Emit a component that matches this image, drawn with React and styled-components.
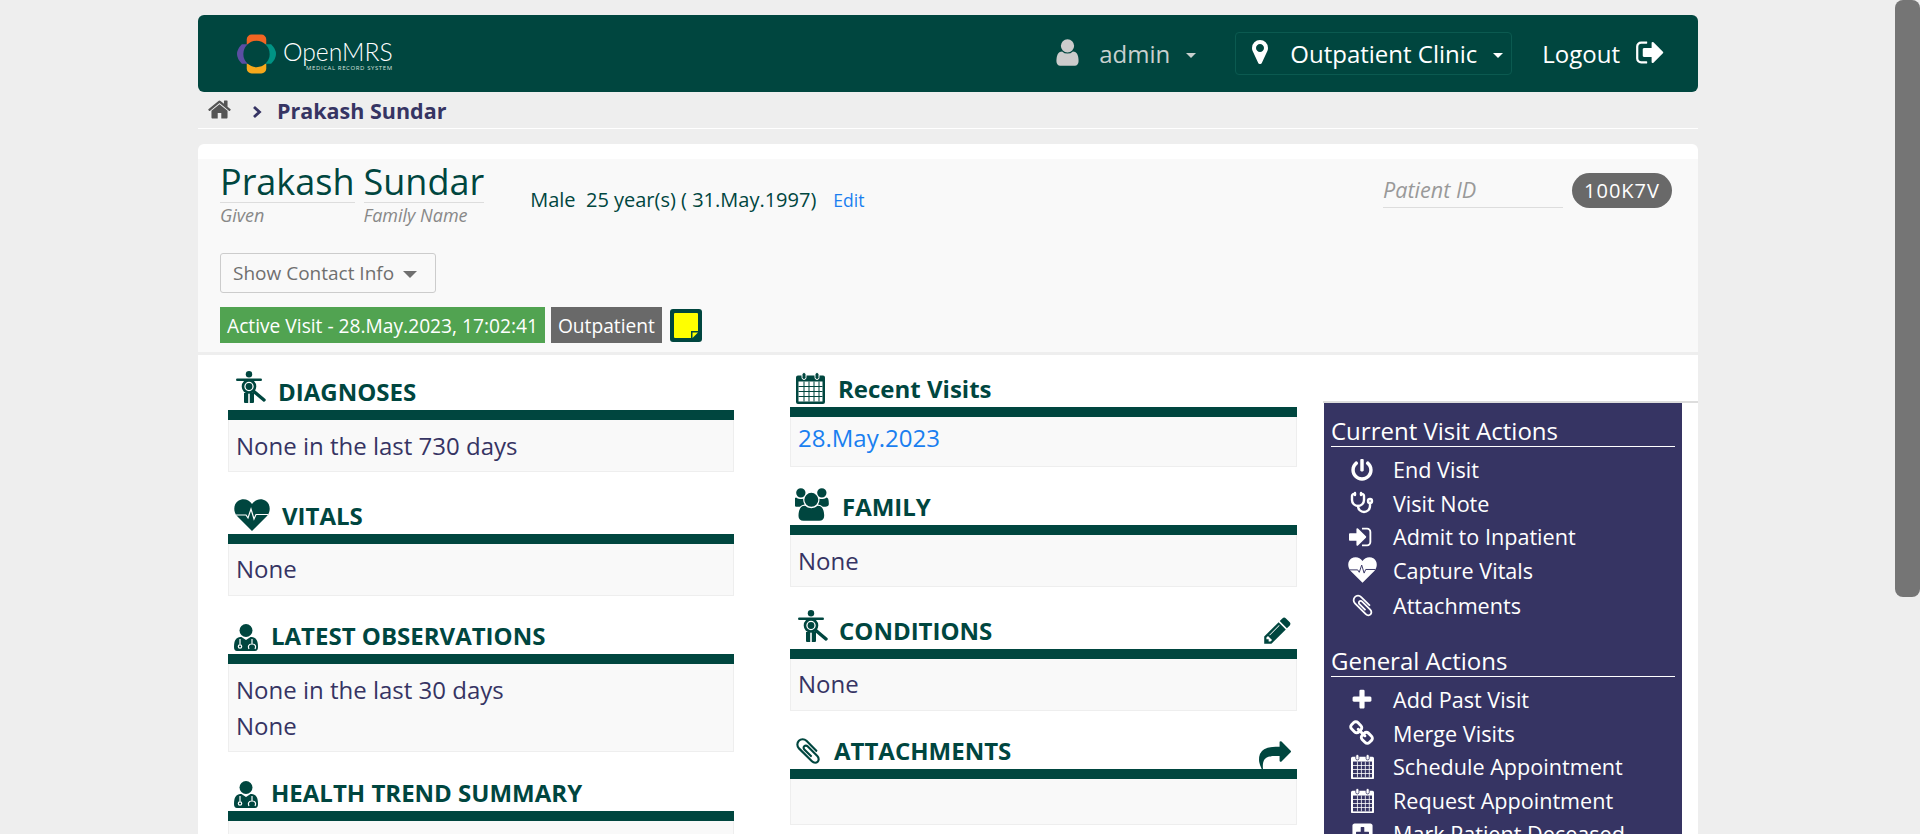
import React from "react";
import styled, { createGlobalStyle } from "styled-components";
import { FaPowerOff, FaPlusSquare } from "react-icons/fa";
import { Stethoscope } from "lucide-react";

const TEAL = "#00463f";
const PURPLE = "#363463";

const GlobalStyle = createGlobalStyle`
  html, body {
    margin: 0;
    height: 100%;
    overflow: hidden;
    background: #eeeeee;
  }
  * { box-sizing: border-box; }
  body {
    font-family: "Open Sans", "Liberation Sans", sans-serif;
  }
`;

const Shell = styled.div`
  height: 100vh;
  overflow: hidden;
  padding-right: 25px;
`;

const ScrollThumb = styled.div`
  position: fixed;
  top: 0;
  right: 0;
  width: 25px;
  height: 597px;
  background: #757575;
  border-radius: 8px;
`;

const Page = styled.div`
  width: 1500px;
  margin-left: 198px;
  padding-top: 15px;
`;

const Header = styled.header`
  height: 77px;
  background: ${TEAL};
  border-radius: 6px;
  display: flex;
  align-items: center;
  padding: 0 32px 0 39px;
`;

const Logo = styled.div`
  display: flex;
  align-items: center;
  gap: 7px;
  margin-right: auto;
`;

const LogoText = styled.div`
  display: flex;
  flex-direction: column;
  align-items: flex-end;
  color: #fff;
  font-family: "Lato", sans-serif;
  font-weight: 300;
  font-size: 24.7px;
  line-height: 26px;
  margin-top: 4px;
  span {
    font-size: 6px;
    line-height: 7px;
    letter-spacing: 0.6px;
    font-family: "Open Sans", sans-serif;
    font-weight: 400;
    color: #d5e0dd;
  }
`;

const NavUser = styled.div`
  display: flex;
  align-items: center;
  color: #c8d0ce;
  font-size: 24px;
  margin-right: 39px;
  svg { width: 31px; height: 31px; margin-right: 16px; fill: #cccccc; margin-top: -3px; }
`;

const Caret = styled.i`
  display: inline-block;
  width: 0;
  height: 0;
  border-left: ${(p) => p.$size || 5}px solid transparent;
  border-right: ${(p) => p.$size || 5}px solid transparent;
  border-top: ${(p) => p.$size || 5}px solid ${(p) => p.$color || "#fff"};
  margin-left: ${(p) => p.$gap || 16}px;
  margin-top: 3px;
`;

const NavLocation = styled.div`
  width: 277px;
  height: 43px;
  border: 1px solid #0b5a50;
  border-radius: 4px;
  display: flex;
  align-items: center;
  color: #fff;
  font-size: 24px;
  padding-left: 10px;
  svg { width: 28px; height: 28px; fill: #fff; margin-right: 16px; margin-top: -3px; }
`;

const NavLogout = styled.div`
  display: flex;
  align-items: center;
  color: #fff;
  font-size: 24px;
  margin-left: 30px;
  svg { width: 31px; height: 31px; fill: #fff; margin-left: 15px; margin-top: -3px; }
`;

const Breadcrumb = styled.nav`
  height: 37px;
  border-bottom: 1px solid #fff;
  display: flex;
  align-items: center;
  padding: 1px 0 0 9px;
  color: ${PURPLE};
  font-weight: 700;
  font-size: 21.5px;
  svg.home { width: 25px; height: 25px; fill: #555; margin-right: 19px; margin-top: -3px; }
  svg.chev { width: 12px; height: 14px; margin-right: 14px; margin-top: 2px; }
`;

const Card = styled.main`
  margin-top: 15px;
  background: #fff;
  border-radius: 6px 6px 0 0;
  padding-top: 15px;
`;

const Demographics = styled.section`
  height: 196px;
  background: #f9f9f9;
  border-bottom: 3px solid #eeeeee;
  padding: 0 22px;
  display: flex;
  flex-direction: column;
`;

const TopRow = styled.div`
  display: flex;
  align-items: flex-start;
  height: 94px;
`;

const NamePart = styled.div`
  margin-right: 9px;
  margin-top: 2px;
  b {
    display: block;
    font-weight: 400;
    font-size: 36px;
    line-height: 41px;
    color: ${TEAL};
    border-bottom: 1px solid #dddddd;
  }
  em {
    display: block;
    font-size: 18px;
    line-height: 24px;
    color: #888888;
  }
`;

const Info = styled.div`
  margin-left: 37px;
  margin-top: 27px;
  font-size: 20px;
  line-height: 28px;
  color: ${TEAL};
  white-space: pre;
  a { color: #1a7ff0; font-size: 17.5px; margin-left: 17px; }
`;

const PatientId = styled.div`
  margin-left: auto;
  margin-right: 4px;
  margin-top: 14px;
  display: flex;
  align-items: center;
  gap: 9px;
  em {
    display: block;
    width: 180px;
    border-bottom: 1px solid #dddddd;
    font-size: 21.6px;
    line-height: 34px;
    color: #999999;
  }
  span {
    width: 100px;
    height: 35px;
    border-radius: 18px;
    background: #696969;
    color: #fff;
    font-size: 20px;
    letter-spacing: 1px;
    display: flex;
    align-items: center;
    justify-content: center;
  }
`;

const ContactButton = styled.button`
  width: 216px;
  height: 40px;
  background: transparent;
  border: 1px solid #cccccc;
  border-radius: 3px;
  color: #6f6f6f;
  font-family: inherit;
  font-size: 19px;
  padding: 0 0 0 12px;
  display: flex;
  align-items: center;
`;

const Tags = styled.div`
  display: flex;
  align-items: center;
  gap: 6px;
  margin-top: 14px;
`;

const Tag = styled.span`
  height: 36px;
  padding: 0 7px;
  display: flex;
  align-items: center;
  color: #fff;
  font-size: 19.2px;
  background: ${(p) => p.$bg};
`;

const StickyNote = styled.svg`
  width: 32px;
  height: 33px;
  margin-left: 2px;
`;

const Dashboard = styled.div`
  display: flex;
  background: #fff;
  padding-left: 30px;
`;

const Column = styled.div`
  width: ${(p) => p.$width}px;
  margin-right: ${(p) => p.$gap}px;
  display: flex;
  flex-direction: column;
`;

const SectionHead = styled.div`
  height: ${(p) => p.$height}px;
  border-bottom: 10px solid ${TEAL};
  display: flex;
  align-items: flex-end;
  color: ${TEAL};
  font-weight: 700;
  font-size: 24px;
  line-height: 30px;
  padding-bottom: 3px;
  padding-left: ${(p) => p.$indent || 0}px;
`;

const HeadIcon = styled.span`
  display: flex;
  align-items: flex-end;
  height: 34px;
  margin-right: ${(p) => p.$gap}px;
  svg { display: block; fill: ${TEAL}; }
`;

const HeadAction = styled.span`
  margin-left: auto;
  margin-right: ${(p) => p.$right}px;
  margin-bottom: ${(p) => p.$below}px;
  display: flex;
  svg { fill: ${TEAL}; }
`;

const SectionBody = styled.div`
  height: ${(p) => p.$height}px;
  background: #f9f9f9;
  border: 1px solid #eeeeee;
  border-top: 0;
  padding: ${(p) => p.$pad ?? 8}px 7px 0;
  color: ${PURPLE};
  font-size: 24px;
  line-height: 36px;
  a { color: #1a7ff0; }
`;

const ActionsColumn = styled.aside`
  width: 375px;
  margin-top: 46px;
  border-top: 2px solid #dddddd;
  padding-left: 1px;
  height: 700px;
`;

const Actions = styled.div`
  width: 358px;
  height: 100%;
  background: ${PURPLE};
  padding: 13px 7px 0 7px;
  color: #fff;
`;

const ActionTitle = styled.div`
  font-size: 24px;
  line-height: 29px;
  padding-bottom: 1px;
  border-bottom: 1px solid #fff;
  margin-bottom: 6px;
`;

const ActionList = styled.ul`
  list-style: none;
  margin: 0 0 23px;
  padding: 0;
`;

const ActionItem = styled.li`
  display: flex;
  align-items: center;
  height: ${(p) => p.$height || 33.5}px;
  font-size: 21.6px;
`;

const ActionIcon = styled.span`
  width: 62px;
  flex: none;
  display: flex;
  justify-content: center;
`;

const Fa4 = ({ d, size, wide, className }) => (
  <svg viewBox={`0 0 ${wide || 1792} 1792`} width={size} height={size} fill="currentColor" className={className}>
    <path d={d} />
  </svg>
);

const HOME = "M1472 992v480q0 26-19 45t-45 19h-384v-384h-256v384h-384q-26 0-45-19t-19-45v-480q0-1 .5-3t.5-3l575-474 575 474q1 2 1 6zm223-69l-62 74q-8 9-21 11h-3q-13 0-21-7l-692-577-692 577q-12 8-24 7-13-2-21-11l-62-74q-8-10-7-23.5t11-21.5l719-599q32-26 76-26t76 26l244 204v-195q0-14 9-23t23-9h192q14 0 23 9t9 23v408l219 182q10 8 11 21.5t-7 23.5z";
const USER = "M1536 1399q0 109-62.5 187t-150.5 78h-854q-88 0-150.5-78t-62.5-187q0-85 8.5-160.5t31.5-152 58.5-131 94-89 134.5-34.5q131 128 313 128t313-128q76 0 134.5 34.5t94 89 58.5 131 31.5 152 8.5 160.5zm-256-887q0 159-112.5 271.5t-271.5 112.5-271.5-112.5-112.5-271.5 112.5-271.5 271.5-112.5 271.5 112.5 112.5 271.5z";
const MARKER = "M1152 640q0-106-75-181t-181-75-181 75-75 181 75 181 181 75 181-75 75-181zm256 0q0 109-33 179l-364 774q-16 33-47.5 52t-67.5 19-67.5-19-46.5-52l-365-774q-33-70-33-179 0-212 150-362t362-150 362 150 150 362z";
const SIGN_OUT = "M704 1440q0 4 1 20t.5 26.5-3 23.5-10 19.5-20.5 6.5h-320q-119 0-203.5-84.5t-84.5-203.5v-704q0-119 84.5-203.5t203.5-84.5h320q13 0 22.5 9.5t9.5 22.5q0 4 1 20t.5 26.5-3 23.5-10 19.5-20.5 6.5h-320q-66 0-113 47t-47 113v704q0 66 47 113t113 47h312l11.5 1 11.5 3 8 5.5 7 9 2 13.5zm928-544q0 26-19 45l-544 544q-19 19-45 19t-45-19-19-45v-288h-448q-26 0-45-19t-19-45v-384q0-26 19-45t45-19h448v-288q0-26 19-45t45-19 45 19l544 544q19 19 19 45z";
const SIGN_IN = "M1184 896q0 26-19 45l-544 544q-19 19-45 19t-45-19-19-45v-288h-448q-26 0-45-19t-19-45v-384q0-26 19-45t45-19h448v-288q0-26 19-45t45-19 45 19l544 544q19 19 19 45zm352-352v704q0 119-84.5 203.5t-203.5 84.5h-320q-13 0-22.5-9.5t-9.5-22.5q0-4-1-20t-.5-26.5 3-23.5 10-19.5 20.5-6.5h320q66 0 113-47t47-113v-704q0-66-47-113t-113-47h-312l-11.5-1-11.5-3-8-5.5-7-9-2-13.5q0-4-1-20t-.5-26.5 3-23.5 10-19.5 20.5-6.5h320q119 0 203.5 84.5t84.5 203.5z";
const SHARE = "M1792 640q0 26-19 45l-512 512q-19 19-45 19t-45-19-19-45v-256h-224q-98 0-175.5 6t-154 21.5-133 42.5-105.5 69.5-80 101-48.5 138.5-17.5 181q0 55 5 123 0 6 2.5 23.5t2.5 26.5q0 15-8.5 25t-23.5 10q-16 0-28-17-7-9-13-22t-13.5-30-10.5-24q-127-285-127-451 0-199 53-333 162-403 875-403h224v-256q0-26 19-45t45-19 45 19l512 512q19 19 19 45z";
const PENCIL = "M491 1536l91-91-235-235-91 91v107h128v128h107zm523-928q0-22-22-22-10 0-17 7l-542 542q-7 7-7 17 0 22 22 22 10 0 17-7l542-542q7-7 7-17zm-54-192l416 416-832 832h-416v-416zm683 96q0 53-37 90l-166 166-416-416 166-165q36-38 90-38 53 0 91 38l235 234q37 39 37 91z";
const PLUS = "M1600 736v192q0 40-28 68t-68 28h-416v416q0 40-28 68t-68 28h-192q-40 0-68-28t-28-68v-416h-416q-40 0-68-28t-28-68v-192q0-40 28-68t68-28h416v-416q0-40 28-68t68-28h192q40 0 68 28t28 68v416h416q40 0 68 28t28 68z";
const GROUP = "M529 896q-162 5-265 128h-134q-82 0-138-40.5t-56-118.5q0-353 124-353 6 0 43.5 21t97.5 42.5 119 21.5q67 0 133-23-5 37-5 66 0 139 81 256zm1071 637q0 120-73 189.5t-194 69.5h-874q-121 0-194-69.5t-73-189.5q0-53 3.5-103.5t14-109 26.5-108.5 43-97.5 62-81 85.5-53.5 111.5-20q10 0 43 21.5t73 48 107 48 135 21.5 135-21.5 107-48 73-48 43-21.5q61 0 111.5 20t85.5 53.5 62 81 43 97.5 26.5 108.5 14 109 3.5 103.5zm-1024-1277q0 106-75 181t-181 75-181-75-75-181 75-181 181-75 181 75 75 181zm704 384q0 159-112.5 271.5t-271.5 112.5-271.5-112.5-112.5-271.5 112.5-271.5 271.5-112.5 271.5 112.5 112.5 271.5zm576 225q0 78-56 118.5t-138 40.5h-134q-103-123-265-128 81-117 81-256 0-29-5-66 66 23 133 23 59 0 119-21.5t97.5-42.5 43.5-21q124 0 124 353zm-128-609q0 106-75 181t-181 75-181-75-75-181 75-181 181-75 181 75 75 181z";
const CHAIN = "M1456 1216q0-40-28-68l-208-208q-28-28-68-28-42 0-72 32 3 3 19 18.5t21.5 21.5 15 19 13 25.5 3.5 27.5q0 40-28 68t-68 28q-15 0-27.5-3.5t-25.5-13-19-15-21.5-21.5-18.5-19q-33 31-33 73 0 40 28 68l206 207q27 27 68 27 40 0 68-26l147-146q28-28 28-67zm-703-705q0-40-28-68l-206-207q-28-28-68-28-39 0-68 27l-147 146q-28 28-28 67 0 40 28 68l208 208q27 27 68 27 42 0 72-31-3-3-19-18.5t-21.5-21.5-15-19-13-25.5-3.5-27.5q0-40 28-68t68-28q15 0 27.5 3.5t25.5 13 19 15 21.5 21.5 18.5 19q33-31 33-73zm895 705q0 120-85 203l-147 146q-83 83-203 83-121 0-204-85l-206-207q-83-83-83-203 0-123 88-209l-88-88q-86 88-208 88-120 0-204-84l-208-208q-84-84-84-204t85-203l147-146q83-83 203-83 121 0 204 85l206 207q83 83 83 203 0 123-88 209l88 88q86-88 208-88 120 0 204 84l208 208q84 84 84 204z";
const CLIP = "M1596 1385q0 117-79 196t-196 79q-135 0-235-100l-777-776q-113-115-113-271 0-159 110-270t269-111q158 0 273 113l605 606q10 10 10 22 0 16-30.5 46.5t-46.5 30.5q-13 0-23-10l-606-607q-79-77-181-77-106 0-179 75t-73 181q0 105 76 181l776 777q63 63 145 63 64 0 106-42t42-106q0-82-63-145l-581-581q-26-24-60-24-29 0-48 19t-19 48q0 32 25 59l410 410q10 10 10 22 0 16-31 47t-47 31q-12 0-22-10l-410-410q-63-61-63-149 0-82 57-139t139-57q88 0 149 63l581 581q100 98 100 235z";

function LogoMark() {
  return (
    <svg viewBox="0 0 40 40" width="39" height="40">
      <rect x="10" y="0" width="20" height="16" rx="5" fill="#f26522" />
      <rect x="10" y="24" width="20" height="16" rx="5" fill="#f7a81b" />
      <path d="M14 10 H5 Q0 15 0 20 Q0 25 5 30 H14 Z" fill="#5b4ea3" />
      <path d="M26 10 H35 Q40 15 40 20 Q40 25 35 30 H26 Z" fill="#009384" />
      <circle cx="20" cy="20" r="13.5" fill={TEAL} />
    </svg>
  );
}

// person with a magnifier, used for diagnoses and conditions
function DiagnosisIcon() {
  return (
    <svg viewBox="0 0 30 36" width="30" height="36">
      <circle cx="13" cy="3.2" r="3.2" />
      <rect x="0" y="7.4" width="26" height="2.6" rx="1.3" />
      <path d="M8 10h10v4H8zM8 22h4.2v10H9a1 1 0 0 1-1-1zM13.8 22H18v9a1 1 0 0 1-1 1h-3.2z" />
      <circle cx="13" cy="15.5" r="6" fill="#fff" stroke={TEAL} strokeWidth="2.6" />
      <circle cx="13" cy="15.5" r="3.4" fill={TEAL} />
      <path d="M17.6 20.2 L28 29" stroke={TEAL} strokeWidth="3.4" strokeLinecap="round" />
    </svg>
  );
}

function HeartPulse({ size = 36, color = TEAL, line = "#fff" }) {
  return (
    <svg viewBox="0 0 36 32" width={size} height={(size * 32) / 36}>
      <path
        d="M18 32 L3 17 C-1 12.5 -0.5 5 4 2 C9 -1.2 15 0.5 18 5 C21 0.5 27 -1.2 32 2 C36.5 5 37 12.5 33 17 Z"
        fill={color}
      />
      <path d="M2 16 H12 L14 19 L17 10 L20 20 L22 15.5 H34" fill="none" stroke={line} strokeWidth="1.2" />
    </svg>
  );
}

function DoctorIcon() {
  return (
    <svg viewBox="0 0 24 27" width="24" height="27">
      <circle cx="12" cy="6.5" r="6.5" />
      <path d="M2.5 14.5 C4 13.2 6 13 7.5 13 L12 16 L16.5 13 C18 13 20 13.2 21.5 14.5 C23.3 16 24 19 24 23 C24 25.5 23 27 21 27 H3 C1 27 0 25.5 0 23 C0 19 .7 16 2.5 14.5 Z" />
      <circle cx="6" cy="22.5" r="1.7" fill="none" stroke="#fff" strokeWidth="1.2" />
      <path d="M6 20.5 V15" stroke="#fff" strokeWidth="1.2" />
      <path d="M15 25 C14 23 14 20 18 20 C22 20 22 23 21 25 M18 20 V15" fill="none" stroke="#fff" strokeWidth="1.2" />
    </svg>
  );
}

function CalendarIcon({ size = 29, cut = "#fff", fill = TEAL }) {
  return (
    <svg viewBox="0 0 29 32" width={size} height={(size * 32) / 29}>
      <path d="M2 3.5 H27 A2 2 0 0 1 29 5.5 V30 A2 2 0 0 1 27 32 H2 A2 2 0 0 1 0 30 V5.5 A2 2 0 0 1 2 3.5 Z" fill={fill} />
      <rect x="2.5" y="9.5" width="24" height="20" fill={cut} />
      {[14, 19, 24].map((y) => (
        <rect key={y} x="2.5" y={y} width="24" height="1" fill={fill} />
      ))}
      {[7.5, 12.5, 17.5, 22.5].map((x) => (
        <rect key={x} x={x} y="9.5" width="1" height="20" fill={fill} />
      ))}
      <rect x="6" y="0.5" width="4" height="7" rx="2" fill={fill} stroke={cut} strokeWidth="1" />
      <rect x="19" y="0.5" width="4" height="7" rx="2" fill={fill} stroke={cut} strokeWidth="1" />
    </svg>
  );
}

const leftSections = [
  { title: "DIAGNOSES", icon: <DiagnosisIcon />, iconGap: 12, indent: 8, head: 65, body: 52, lines: ["None in the last 730 days"] },
  { title: "VITALS", icon: <HeartPulse />, iconGap: 12, indent: 6, head: 72, body: 52, pad: 7, lines: ["None"] },
  { title: "LATEST OBSERVATIONS", icon: <DoctorIcon />, iconGap: 13, indent: 6, head: 68, body: 88, lines: ["None in the last 30 days", "None"] },
  { title: "HEALTH TREND SUMMARY", icon: <DoctorIcon />, iconGap: 13, indent: 6, head: 69, body: 52, lines: [] },
];

const middleSections = [
  { title: "Recent Visits", icon: <CalendarIcon />, iconGap: 13, indent: 6, head: 62, body: 50, pad: 3, link: "28.May.2023" },
  { title: "FAMILY", icon: <Fa4 d={GROUP} wide={1920} size={35} />, iconGap: 12, indent: 5, head: 68, body: 52, lines: ["None"] },
  { title: "CONDITIONS", icon: <DiagnosisIcon />, iconGap: 11, indent: 8, head: 72, body: 52, pad: 7, lines: ["None"], action: <Fa4 d={PENCIL} size={31} />, actionRight: 4, actionBelow: 0 },
  { title: "ATTACHMENTS", icon: <Fa4 d={CLIP} size={30} />, iconGap: 11, indent: 3, head: 68, body: 46, lines: [], action: <Fa4 d={SHARE} size={32} />, actionRight: 6, actionBelow: -6 },
];

const currentActions = [
  { label: "End Visit", icon: <FaPowerOff size={22} /> },
  { label: "Visit Note", icon: <Stethoscope size={24} strokeWidth={2.4} /> },
  { label: "Admit to Inpatient", icon: <Fa4 d={SIGN_IN} size={26} /> },
  { label: "Capture Vitals", icon: <HeartPulse size={29} color="#fff" line={PURPLE} /> },
  { label: "Attachments", icon: <Fa4 d={CLIP} size={25} />, height: 36 },
];

const generalActions = [
  { label: "Add Past Visit", icon: <Fa4 d={PLUS} size={24} /> },
  { label: "Merge Visits", icon: <Fa4 d={CHAIN} size={27} /> },
  { label: "Schedule Appointment", icon: <CalendarIcon size={23} cut={PURPLE} fill="#fff" /> },
  { label: "Request Appointment", icon: <CalendarIcon size={23} cut={PURPLE} fill="#fff" /> },
  { label: "Mark Patient Deceased", icon: <FaPlusSquare size={23} /> },
];

function Section({ section }) {
  return (
    <>
      <SectionHead $height={section.head} $indent={section.indent}>
        <HeadIcon $gap={section.iconGap}>{section.icon}</HeadIcon>
        {section.title}
        {section.action && (
          <HeadAction $right={section.actionRight} $below={section.actionBelow}>
            {section.action}
          </HeadAction>
        )}
      </SectionHead>
      <SectionBody $height={section.body} $pad={section.pad}>
        {section.link && <a>{section.link}</a>}
        {(section.lines || []).map((line, i) => (
          <div key={i}>{line}</div>
        ))}
      </SectionBody>
    </>
  );
}

function ActionGroup({ title, items }) {
  return (
    <>
      <ActionTitle>{title}</ActionTitle>
      <ActionList>
        {items.map((item) => (
          <ActionItem key={item.label} $height={item.height}>
            <ActionIcon>{item.icon}</ActionIcon>
            {item.label}
          </ActionItem>
        ))}
      </ActionList>
    </>
  );
}

export default function App() {
  return (
    <Shell>
      <GlobalStyle />
      <Page>
        <Header>
          <Logo>
            <LogoMark />
            <LogoText>
              OpenMRS
              <span>MEDICAL RECORD SYSTEM</span>
            </LogoText>
          </Logo>
          <NavUser>
            <Fa4 d={USER} />
            admin
            <Caret $color="#c8d0ce" />
          </NavUser>
          <NavLocation>
            <Fa4 d={MARKER} />
            Outpatient Clinic
            <Caret />
          </NavLocation>
          <NavLogout>
            Logout
            <Fa4 d={SIGN_OUT} />
          </NavLogout>
        </Header>
        <Breadcrumb>
          <Fa4 d={HOME} className="home" />
          <svg className="chev" viewBox="0 0 12 14">
            <path d="M3 2 L8.5 7 L3 12" fill="none" stroke={PURPLE} strokeWidth="2.8" />
          </svg>
          Prakash Sundar
        </Breadcrumb>
        <Card>
          <Demographics>
            <TopRow>
              <NamePart>
                <b>Prakash</b>
                <em>Given</em>
              </NamePart>
              <NamePart>
                <b>Sundar</b>
                <em>Family Name</em>
              </NamePart>
              <Info>
                {"Male  25 year(s) ( 31.May.1997)"}
                <a>Edit</a>
              </Info>
              <PatientId>
                <em>Patient ID</em>
                <span>100K7V</span>
              </PatientId>
            </TopRow>
            <ContactButton>
              Show Contact Info
              <Caret $size={7} $color="#6f6f6f" $gap={9} />
            </ContactButton>
            <Tags>
              <Tag $bg="#51a351">Active Visit - 28.May.2023, 17:02:41</Tag>
              <Tag $bg="#696969">Outpatient</Tag>
              <StickyNote viewBox="0 0 32 33">
                <rect width="32" height="33" rx="3" fill={TEAL} />
                <rect x="4" y="4" width="24" height="25" rx="1" fill="#ffff00" />
                <rect x="21" y="22" width="7" height="7" fill={TEAL} />
                <path d="M22.5 23.5 H28 L22.5 29 Z" fill="#ffff00" />
              </StickyNote>
            </Tags>
          </Demographics>
          <Dashboard>
            <Column $width={506} $gap={56}>
              {leftSections.map((s) => (
                <Section key={s.title} section={s} />
              ))}
            </Column>
            <Column $width={507} $gap={26}>
              {middleSections.map((s) => (
                <Section key={s.title} section={s} />
              ))}
            </Column>
            <ActionsColumn>
              <Actions>
                <ActionGroup title="Current Visit Actions" items={currentActions} />
                <ActionGroup title="General Actions" items={generalActions} />
              </Actions>
            </ActionsColumn>
          </Dashboard>
        </Card>
      </Page>
      <ScrollThumb />
    </Shell>
  );
}
